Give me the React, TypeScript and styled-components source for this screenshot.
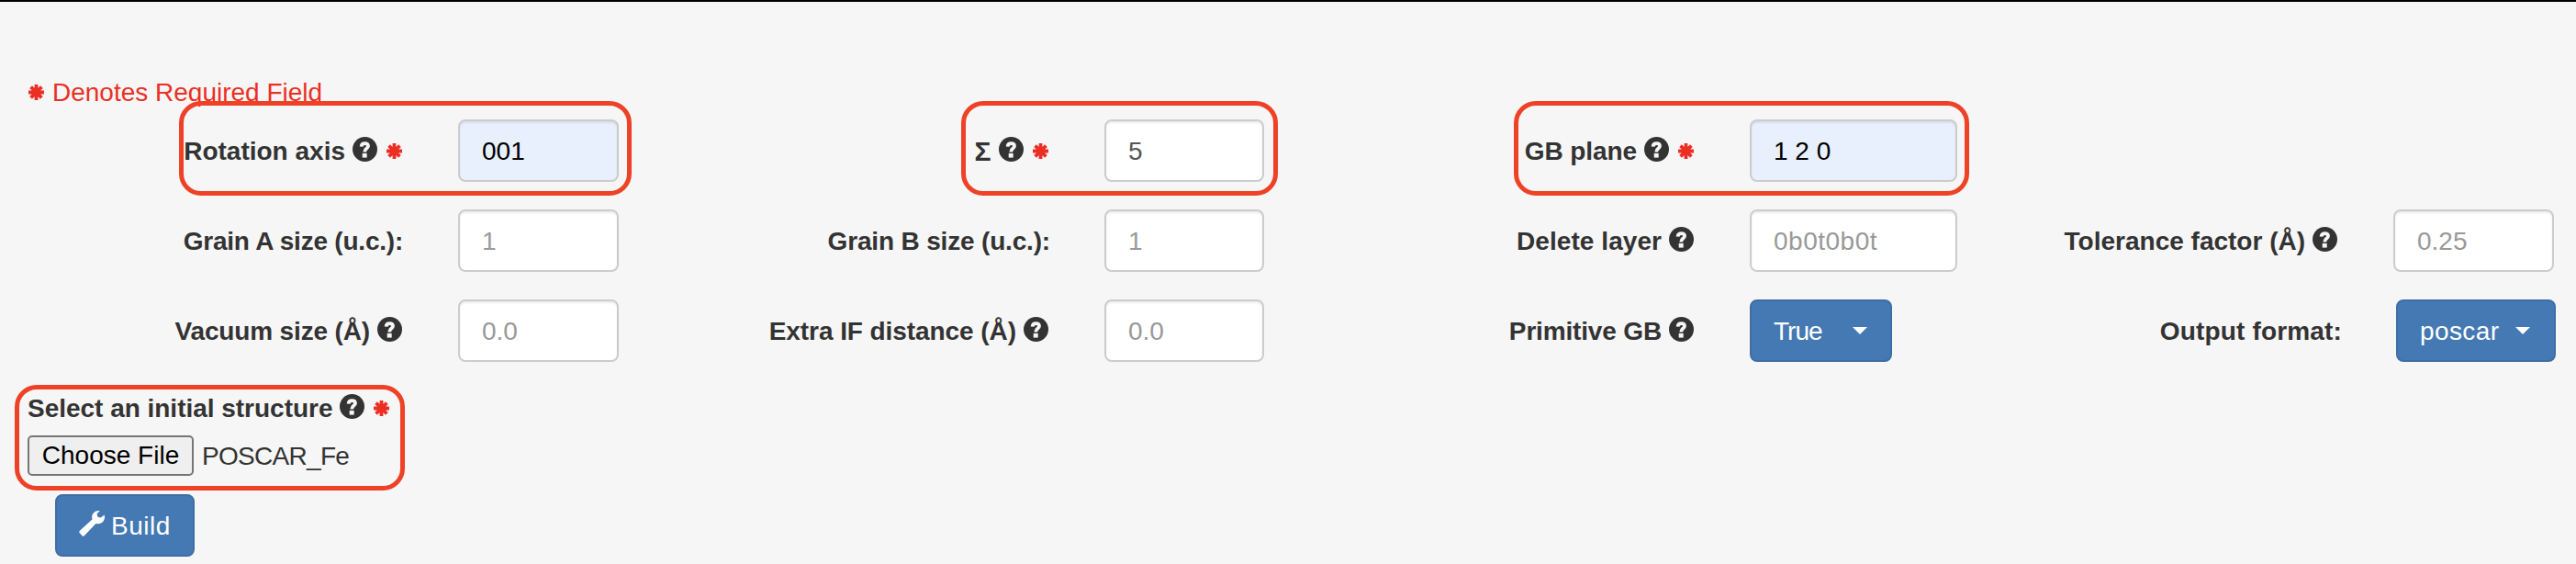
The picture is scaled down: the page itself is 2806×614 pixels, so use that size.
import React from "react";
import styled, { createGlobalStyle } from "styled-components";

const GlobalStyle = createGlobalStyle`
  *, *::before, *::after { box-sizing: border-box; }
  body {
    margin: 0;
    background: #f6f6f6;
    color: #333;
    font-family: "Liberation Sans", Arial, sans-serif;
    font-size: 28px;
    line-height: 40px;
  }
`;

const Page = styled.main`
  height: 614px;
  overflow: hidden;
  padding-top: 78px;
  border-top: 2px solid #000;
  background: #f6f6f6;
`;

const RequiredNote = styled.p`
  margin: 0;
  height: 50px;
  padding-left: 31px;
  display: flex;
  align-items: flex-start;
  gap: 9px;
  color: #ec2f24;
`;

const NoteMark = styled.span`
  display: flex;
  align-items: center;
  height: 40px;
`;

const NoteText = styled.span`
  padding-top: 1px;
`;

const FieldGrid = styled.div`
  display: grid;
  grid-template-columns: 438px 175px 407px 174px 407px 226px 353px 175px;
  column-gap: 61px;
  grid-auto-rows: 68px;
  row-gap: 30px;
`;

const LabelCell = styled.label<{ $col: number; $row: number; $shift?: number }>`
  grid-column: ${(p) => p.$col};
  grid-row: ${(p) => p.$row};
  display: flex;
  align-items: center;
  justify-content: flex-end;
  margin-right: ${(p) => -(p.$shift ?? 0)}px;
  font-weight: 700;
`;

const Text = styled.span<{ $track?: number; $size?: number }>`
  padding-top: 2px;
  font-size: ${(p) => p.$size ?? 28}px;
  letter-spacing: ${(p) => p.$track ?? 0}px;
  white-space: nowrap;
`;

const HelpSvg = styled.svg`
  flex: none;
  width: 27px;
  height: 27px;
  margin: 0 0 4px 8px;
`;

const StarSvg = styled.svg<{ $gap?: number }>`
  flex: none;
  width: 17px;
  height: 17px;
  margin-left: ${(p) => p.$gap ?? 0}px;
`;

const Input = styled.input<{ $col: number; $row: number; $filled?: boolean; $track?: number }>`
  grid-column: ${(p) => p.$col};
  grid-row: ${(p) => p.$row};
  width: 100%;
  min-width: 0;
  height: 68px;
  margin: 0;
  padding: 2px 24px 0;
  border: 2px solid #ccc;
  border-radius: 8px;
  background: ${(p) => (p.$filled ? "#e8effd" : "#fff")};
  box-shadow: inset 0 2px 2px rgba(0, 0, 0, 0.075);
  color: ${(p) => (p.$filled ? "#000" : "#555")};
  font: inherit;
  letter-spacing: ${(p) => p.$track ?? 0}px;
  outline: none;
  &::placeholder { color: #999; opacity: 1; }
`;

const Button = styled.button<{ $width: number; $gap?: number }>`
  display: flex;
  align-items: center;
  gap: ${(p) => p.$gap ?? 0}px;
  width: ${(p) => p.$width}px;
  height: 68px;
  padding: 0 0 0 24px;
  border: 2px solid #3f6ea5;
  border-radius: 8px;
  background: #4479b3;
  color: #fff;
  font: inherit;
`;

const DropdownCell = styled.div<{ $col: number; $shift?: number }>`
  grid-column: ${(p) => p.$col};
  grid-row: 3;
  padding-left: ${(p) => p.$shift ?? 0}px;
`;

const Caret = styled.span`
  width: 0;
  height: 0;
  margin-top: -1px;
  border: 8px solid transparent;
  border-top-color: #fff;
  border-bottom: 0;
`;

const FileSection = styled.section`
  margin-top: 30px;
  padding-left: 30px;
`;

const FileLabel = styled.label`
  display: flex;
  align-items: center;
  height: 40px;
  font-weight: 700;
`;

const FileRow = styled.div`
  display: flex;
  align-items: center;
  gap: 9px;
  height: 44px;
  margin-top: 10px;
`;

const ChooseButton = styled.button`
  width: 181px;
  height: 44px;
  padding: 0;
  border: 2px solid #767676;
  border-radius: 5px;
  background: #efefef;
  color: #000;
  font: inherit;
`;

const BuildRow = styled.div`
  padding: 20px 0 0 30px;
`;

const WrenchSvg = styled.svg`
  width: 28px;
  height: 28px;
  margin-top: -4px;
  overflow: visible;
`;

const Highlight = styled.div<{ $x: number; $y: number; $w: number; $h: number }>`
  position: absolute;
  left: ${(p) => p.$x}px;
  top: ${(p) => p.$y}px;
  width: ${(p) => p.$w}px;
  height: ${(p) => p.$h}px;
  border: 5px solid #ee4126;
  border-radius: 24px;
  pointer-events: none;
`;

function Help() {
  return (
    <HelpSvg viewBox="0 0 27 27" aria-hidden="true">
      <circle cx="13.5" cy="13.5" r="13.5" fill="#333" />
      <path
        d="M9.6 10.7C9.7 8.3 11.2 7.1 13.5 7.1C15.8 7.1 17 8.3 17 10C17 12.8 13.2 12.5 13.2 16.5"
        fill="none"
        stroke="#f6f6f6"
        strokeWidth="3.8"
      />
      <rect x="10.7" y="17.9" width="5" height="4.7" fill="#f6f6f6" />
    </HelpSvg>
  );
}

function Star({ gap }: { gap?: number }) {
  return (
    <StarSvg $gap={gap} viewBox="0 0 17 17" aria-hidden="true">
      <g stroke="#ec2f24" strokeWidth="3.8">
        <path d="M8.5 0V17M0 8.5H17M2.6 2.6L14.4 14.4M14.4 2.6L2.6 14.4" />
      </g>
    </StarSvg>
  );
}

function Wrench() {
  return (
    <WrenchSvg viewBox="0 0 28 28" aria-hidden="true">
      <path
        d="M22.8 0C19.8-.5 16.8.7 15.2 3.2C14 5.1 13.9 7.3 14.6 9.2L.7 22Q-.2 23 .6 24L3.8 27.4Q4.8 28.2 5.8 27.3L18.7 13.7C21.3 14.8 24.4 14.1 26.4 11.8C28 9.8 28.4 7.2 27.7 4.6L23.9 7.4L20.6 6.9L19.5 3.4Z"
        fill="#fff"
      />
    </WrenchSvg>
  );
}

type Field = {
  col: number;
  row: number;
  label: string;
  track?: number;
  size?: number;
  shift?: number;
  help?: boolean;
  required?: boolean;
};

const labels: Field[] = [
  { col: 1, row: 1, label: "Rotation axis", help: true, required: true },
  { col: 3, row: 1, label: "Σ", size: 30, track: 0.5, help: true, required: true },
  { col: 5, row: 1, label: "GB plane", track: -0.08, help: true, required: true },
  { col: 1, row: 2, label: "Grain A size (u.c.):", track: -0.22, shift: 1 },
  { col: 3, row: 2, label: "Grain B size (u.c.):", track: -0.17, shift: 2 },
  { col: 5, row: 2, label: "Delete layer", track: 0.06, help: true },
  { col: 7, row: 2, label: "Tolerance factor (Å)", help: true },
  { col: 1, row: 3, label: "Vacuum size (Å)", track: -0.15, help: true },
  { col: 3, row: 3, label: "Extra IF distance (Å)", track: -0.07, help: true },
  { col: 5, row: 3, label: "Primitive GB", track: -0.16, help: true },
  { col: 7, row: 3, label: "Output format:", track: 0.16, shift: 5 },
];

export default function App() {
  return (
    <Page>
      <GlobalStyle />
      <RequiredNote>
        <NoteMark><Star /></NoteMark>
        <NoteText>Denotes Required Field</NoteText>
      </RequiredNote>

      <FieldGrid>
        {labels.map((f) => (
          <LabelCell key={f.label} $col={f.col} $row={f.row} $shift={f.shift}>
            <Text $track={f.track} $size={f.size}>{f.label}</Text>
            {f.help && <Help />}
            {f.required && <Star gap={10} />}
          </LabelCell>
        ))}
        <Input $col={2} $row={1} $filled defaultValue="001" />
        <Input $col={4} $row={1} defaultValue="5" />
        <Input $col={6} $row={1} $filled defaultValue="1 2 0" />
        <Input $col={2} $row={2} placeholder="1" />
        <Input $col={4} $row={2} placeholder="1" />
        <Input $col={6} $row={2} $track={0.5} placeholder="0b0t0b0t" />
        <Input $col={8} $row={2} placeholder="0.25" />
        <Input $col={2} $row={3} placeholder="0.0" />
        <Input $col={4} $row={3} placeholder="0.0" />
        <DropdownCell $col={6}>
          <Button $width={155} $gap={33}>
            <Text $track={-1}>True</Text>
            <Caret />
          </Button>
        </DropdownCell>
        <DropdownCell $col={8} $shift={3}>
          <Button $width={174} $gap={18}>
            <Text $track={0.4}>poscar</Text>
            <Caret />
          </Button>
        </DropdownCell>
      </FieldGrid>

      <FileSection>
        <FileLabel>
          <Text $track={-0.02}>Select an initial structure</Text>
          <Help />
          <Star gap={10} />
        </FileLabel>
        <FileRow>
          <ChooseButton>Choose File</ChooseButton>
          <Text $track={-0.7}>POSCAR_Fe</Text>
        </FileRow>
        <BuildRow>
          <Button $width={152} $gap={7}>
            <Wrench />
            <Text $track={0.5}>Build</Text>
          </Button>
        </BuildRow>
      </FileSection>

      <Highlight $x={195} $y={110} $w={493} $h={103} />
      <Highlight $x={1047} $y={110} $w={345} $h={103} />
      <Highlight $x={1649} $y={110} $w={496} $h={103} />
      <Highlight $x={16} $y={419} $w={425} $h={115} />
    </Page>
  );
}
